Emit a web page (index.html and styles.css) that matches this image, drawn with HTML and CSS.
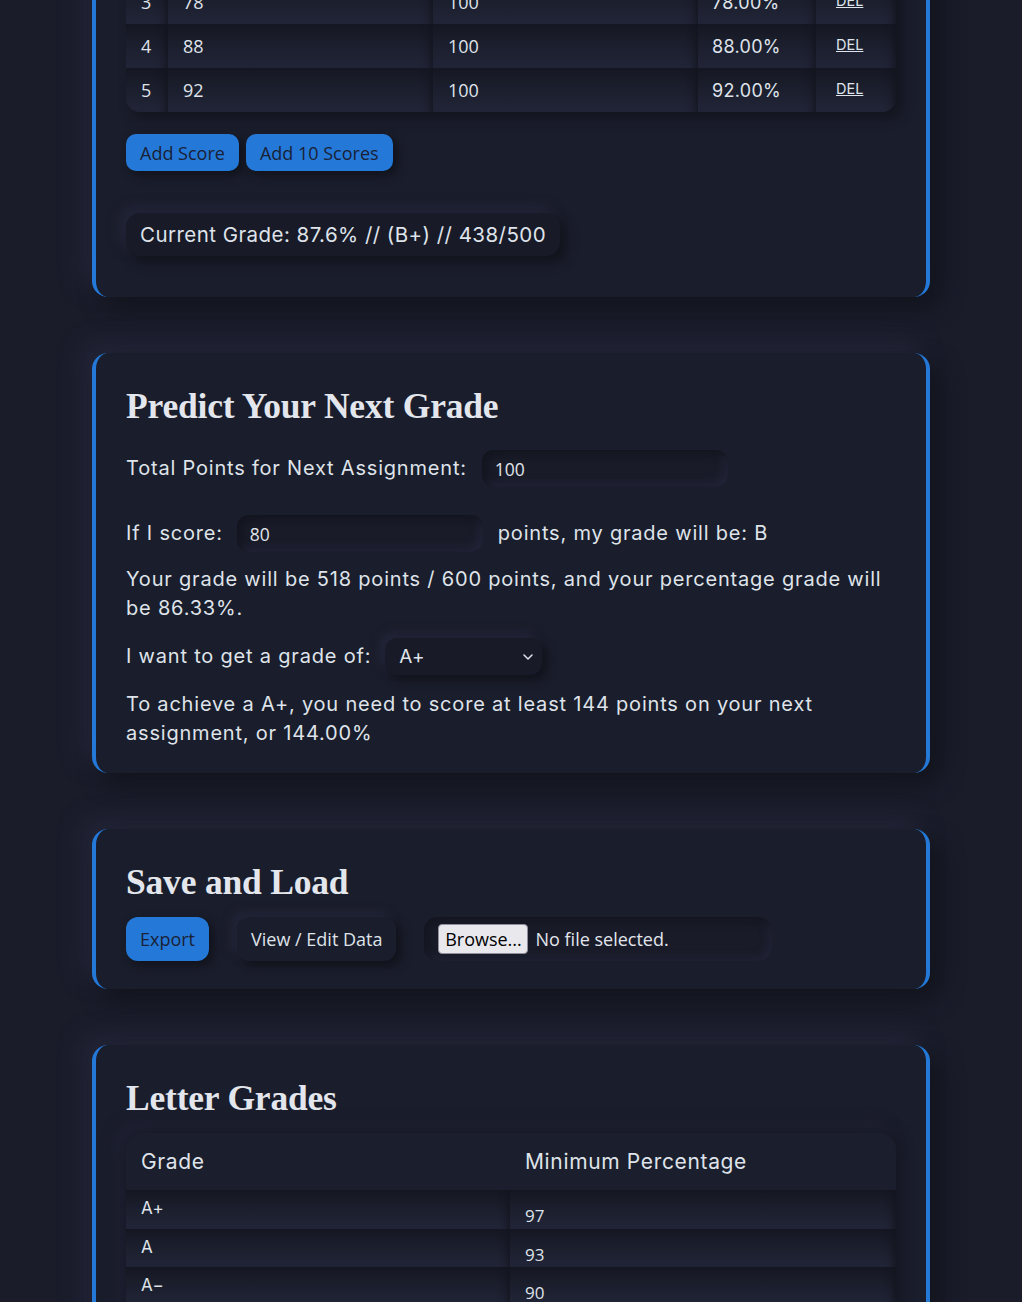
FILE: index.html
```html
<!DOCTYPE html>
<html lang="en">
<head>
<meta charset="utf-8">
<title>Grade Calculator</title>
<link rel="stylesheet" href="styles.css">
</head>
<body>
<main class="page">
  <section class="card card-scores">
    <table class="scores">
      <colgroup>
        <col class="c-num"><col class="c-score"><col class="c-total"><col class="c-pct"><col class="c-del">
      </colgroup>
      <tbody>
        <tr><td class="sys">3</td><td class="sys">78</td><td class="sys">100</td><td>78.00%</td><td><a class="del" href="#">DEL</a></td></tr>
        <tr><td class="sys">4</td><td class="sys">88</td><td class="sys">100</td><td>88.00%</td><td><a class="del" href="#">DEL</a></td></tr>
        <tr><td class="sys">5</td><td class="sys">92</td><td class="sys">100</td><td>92.00%</td><td><a class="del" href="#">DEL</a></td></tr>
      </tbody>
    </table>
    <div class="btn-row">
      <button class="btn btn-blue">Add Score</button>
      <button class="btn btn-blue">Add 10 Scores</button>
    </div>
    <div class="current">Current Grade: 87.6% // (B+) // 438/500</div>
  </section>

  <section class="card card-predict">
    <h2>Predict Your Next Grade</h2>
    <div class="row row-first">
      <label class="label">Total Points for Next Assignment:</label>
      <input class="field" type="text" value="100">
    </div>
    <div class="row row-second">
      <label class="label">If I score:</label>
      <input class="field" type="text" value="80">
      <span class="after">points, my grade will be: B</span>
    </div>
    <p class="para">Your grade will be 518 points / 600 points, and your percentage grade will be 86.33%.</p>
    <div class="row row-select">
      <label class="label">I want to get a grade of:</label>
      <div class="select">
        <span>A+</span>
        <svg class="chev" width="10" height="6" viewBox="0 0 10 6"><path d="M1 1l4 4 4-4" fill="none" stroke="#dfe3ea" stroke-width="1.5" stroke-linecap="round" stroke-linejoin="round"/></svg>
      </div>
    </div>
    <p class="para para-last">To achieve a A+, you need to score at least 144 points on your next assignment, or 144.00%</p>
  </section>

  <section class="card card-save">
    <h2>Save and Load</h2>
    <div class="save-row">
      <button class="btn btn-blue btn-tall">Export</button>
      <button class="btn btn-dark btn-tall">View / Edit Data</button>
      <div class="file">
        <span class="browse">Browse...</span>
        <span class="nofile">No file selected.</span>
      </div>
    </div>
  </section>

  <section class="card card-letters">
    <h2>Letter Grades</h2>
    <table class="letters">
      <thead>
        <tr><th>Grade</th><th>Minimum Percentage</th></tr>
      </thead>
      <tbody>
        <tr><td class="g">A+</td><td class="n">97</td></tr>
        <tr><td class="g">A</td><td class="n">93</td></tr>
        <tr><td class="g">A&minus;</td><td class="n">90</td></tr>
        <tr><td class="g">B+</td><td class="n">87</td></tr>
      </tbody>
    </table>
  </section>
</main>
</body>
</html>
```

FILE: styles.css
```css
* { box-sizing: border-box; }

html, body {
  margin: 0;
  padding: 0;
}

body {
  background: #1a1c2a;
  color: #dfe3ea;
  font-family: Inter, "Noto Sans", sans-serif;
  font-size: 20px;
  line-height: 29px;
  letter-spacing: 0.8px;
  overflow: hidden;
}

.page {
  width: 838px;
  margin: 0 auto;
}

.card {
  background: #1a1d2b;
  border-left: 4px solid #2479d8;
  border-right: 4px solid #2479d8;
  border-radius: 16px;
  padding: 30px;
  margin-bottom: 56px;
  box-shadow: 10px 10px 22px #12141c, -10px -10px 22px #24273a;
}

.card-scores {
  margin-top: -50px;
  padding-bottom: 41px;
}

.card-predict { padding-bottom: 25px; }
.card-save { padding-bottom: 28px; }

h2 {
  font-family: "Liberation Serif", "Times New Roman", serif;
  font-weight: 700;
  font-size: 35.5px;
  line-height: 36px;
  margin: 5px 0 17px;
  color: #e3e6ec;
  letter-spacing: -0.2px;
}

/* scores table */
.scores {
  width: 770px;
  border-collapse: separate;
  border-spacing: 0;
  table-layout: fixed;
  border-radius: 0 0 14px 14px;
  overflow: hidden;
  box-shadow: 6px 6px 12px #13151e;
}
.c-num { width: 42px; }
.c-score { width: 265px; }
.c-total { width: 265px; }
.c-pct { width: 118px; }
.c-del { width: 80px; }

.scores td {
  height: 44px;
  padding: 0 14px;
  font-size: 18px;
  letter-spacing: 0.3px;
  background: linear-gradient(180deg, #151722 0%, #1b1e2c 45%, #222538 100%);
  box-shadow: inset -10px 0 10px -8px #12141d;
  white-space: nowrap;
}
.scores td.sys {
  font-family: "Open Sans", sans-serif;
  font-size: 18px;
  letter-spacing: 0;
  padding-left: 15px;
}
.del {
  color: #dfe3ea;
  font-size: 14.5px;
  letter-spacing: 0;
  text-decoration: underline;
  position: relative;
  top: -2px;
  left: 6px;
}

/* buttons */
.btn {
  font-family: "Open Sans", sans-serif;
  font-size: 18px;
  letter-spacing: 0;
  height: 37px;
  padding: 0 14px;
  border: none;
  border-radius: 10px;
  cursor: pointer;
}
.btn-blue {
  background: #2479d8;
  color: #1a2136;
  box-shadow: 4px 4px 10px #10121a;
}
.btn-dark {
  background: #1a1d2b;
  color: #dfe3ea;
  box-shadow: 5px 5px 10px #11131b, -5px -5px 10px #23263a;
}
.btn-tall {
  height: 44px;
  border-radius: 12px;
}

.btn-row {
  margin-top: 22px;
  display: flex;
  gap: 7px;
}

.current {
  margin-top: 42px;
  display: inline-flex;
  align-items: center;
  height: 43px;
  padding: 0 14px;
  border-radius: 14px;
  background: #181a27;
  font-size: 20.5px;
  letter-spacing: 0.45px;
  box-shadow: 6px 6px 12px #11131b, -6px -6px 12px #23263a;
}

/* predict */
.row {
  display: flex;
  align-items: center;
}
.row-first { margin-top: 26px; }
.row-second { margin-top: 28px; }
.row-select { margin-top: 15px; }

.field {
  width: 246px;
  height: 37px;
  border: none;
  border-radius: 12px;
  background: #191b28;
  color: #e1e5ec;
  font-family: "Open Sans", sans-serif;
  font-size: 17.5px;
  letter-spacing: 0;
  padding: 0 13px;
  box-shadow: inset 4px 4px 8px #12141d, inset -4px -4px 8px #23263a;
  outline: none;
}
.row-first .field { margin-left: 15px; }
.row-second .field { margin-left: 14px; }
.after { margin-left: 15px; }

.para {
  margin: 13px 0 0;
}
.para-last { margin-top: 15px; }

.select {
  position: relative;
  margin-left: 14px;
  width: 157px;
  height: 37px;
  border-radius: 12px;
  background: #181a27;
  display: flex;
  align-items: center;
  justify-content: space-between;
  padding: 0 9px 0 14px;
  font-size: 19px;
  letter-spacing: 0.4px;
  box-shadow: 5px 5px 10px #11131b, -5px -5px 10px #23263a;
}
.chev { display: block; }

/* save */
.save-row {
  display: flex;
  align-items: center;
  gap: 28px;
}
.file {
  width: 348px;
  height: 44px;
  border-radius: 14px;
  background: #191b28;
  display: flex;
  align-items: center;
  padding-left: 14px;
  box-shadow: inset 4px 4px 8px #13151e, inset -3px -3px 8px #23263a;
  font-family: "Open Sans", sans-serif;
  font-size: 18px;
  letter-spacing: 0;
}
.browse {
  width: 90px;
  height: 30px;
  border: 1px solid #8f8f9d;
  border-radius: 4px;
  background: #e9e9ed;
  color: #000;
  display: flex;
  align-items: center;
  justify-content: center;
}
.nofile {
  margin-left: 7px;
  color: #e1e5ec;
}

/* letter grades */
.letters {
  width: 770px;
  border-collapse: separate;
  border-spacing: 0;
  table-layout: fixed;
  border-radius: 16px 16px 0 0;
  box-shadow: 0 0 16px #12141c, -8px -8px 16px #22253a;
}
.letters th {
  height: 57px;
  text-align: left;
  font-weight: 400;
  font-size: 21px;
  letter-spacing: 0.65px;
  padding: 0 15px;
  background: #1b1e2c;
}
.letters th:first-child {
  width: 384px;
  border-top-left-radius: 16px;
}
.letters th:last-child { border-top-right-radius: 16px; }
.letters td {
  height: 38.5px;
  padding: 0 15px;
  background: linear-gradient(180deg, #151722 0%, #1b1e2c 45%, #222538 100%);
  box-shadow: inset -10px 0 10px -8px #12141d;
}
.letters td.g {
  font-size: 17px;
  letter-spacing: 0.4px;
  vertical-align: top;
  padding-top: 6px;
  line-height: 24px;
}
.letters td.n {
  font-family: "Open Sans", sans-serif;
  font-size: 17px;
  letter-spacing: 0;
  vertical-align: top;
  padding-top: 14px;
  line-height: 24px;
}
```
